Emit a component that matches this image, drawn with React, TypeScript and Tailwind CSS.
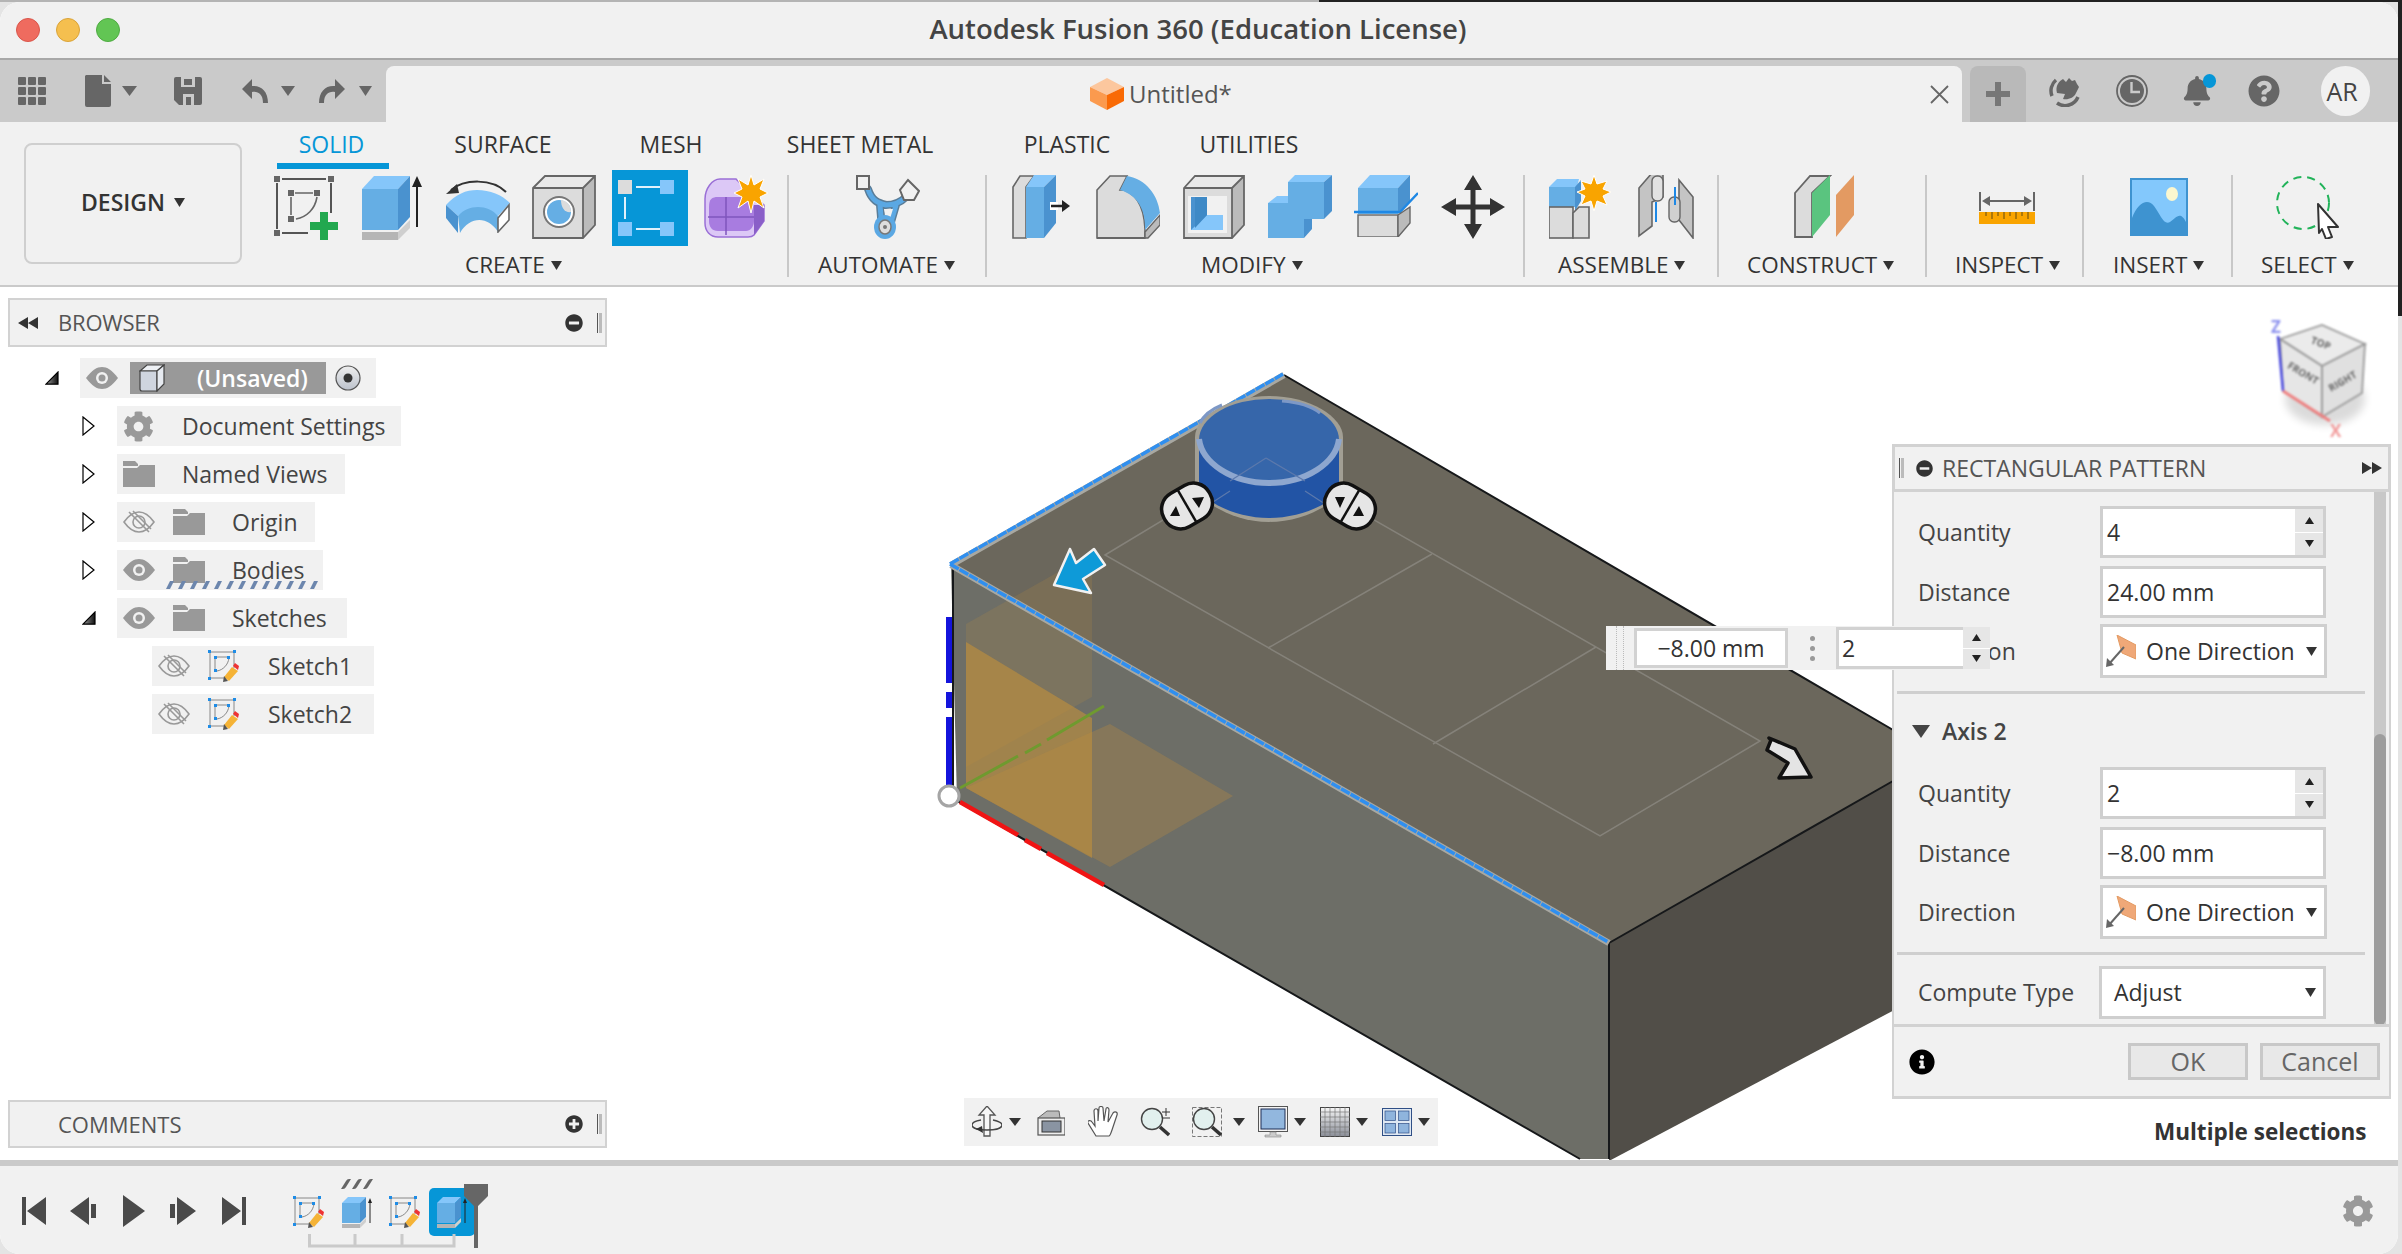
import React from 'react';
import { FaBell, FaCog, FaInfoCircle, FaMinusCircle, FaPlusCircle, FaQuestionCircle } from 'react-icons/fa';

const Caret = ({ className = 'w-[11px] h-[9px]' }: { className?: string }) => (
  <svg viewBox="0 0 10 8" preserveAspectRatio="none" className={className}>
    <path d="M0 0h10L5 8z" fill="currentColor" />
  </svg>
);

/* ---------- ribbon icons ---------- */

const SketchCreate = () => (
  <svg width="64" height="65" viewBox="0 0 64 65">
    <path d="M3 8V54M8 4H52M57 8V38M8 58H34" stroke="#555" strokeWidth="2" fill="none" />
    <g fill="#666">
      <rect x="0" y="1" width="6" height="6" />
      <rect x="54" y="1" width="6" height="6" />
      <rect x="0" y="55" width="6" height="6" />
      <rect x="14" y="15" width="6" height="6" />
      <rect x="40" y="15" width="6" height="6" />
      <rect x="14" y="41" width="6" height="6" />
    </g>
    <path d="M17 22V40M21 18H39M43 22C41 34 33 42 22 44" stroke="#666" strokeWidth="1.6" fill="none" />
    <path d="M46 37h8v10h10v8H54v10h-8V55H36v-8h10z" fill="#22a84f" />
  </svg>
);

const Extrude = () => (
  <svg width="61" height="65" viewBox="0 0 61 65">
    <path d="M0 14 12 1h36L36 14z" fill="#85c6fa" />
    <rect x="0" y="14" width="36" height="41" fill="#65aee4" />
    <path d="M36 14 48 1v41L36 55z" fill="#4a92cf" />
    <rect x="0" y="57" width="36" height="8" fill="#b5b5b5" />
    <path d="M36 57 48 45v8L36 65z" fill="#cfcfcf" />
    <path d="M55 52V8" stroke="#222" strokeWidth="2" />
    <path d="M50 12 55 1l5 11z" fill="#222" />
  </svg>
);

const Revolve = () => (
  <svg width="64" height="53" viewBox="0 0 64 53" className="mt-[5px]">
    <path d="M5 10C18 -1 46 -2 60 12" stroke="#333" strokeWidth="2" fill="none" />
    <path d="M0 14 11 4l2 9z" fill="#333" />
    <path d="M0 25C10 14 20 10 31 10 44 10 56 15 64 23L52 36C44 30 22 28 12 36z" fill="#85c6fa" />
    <path d="M12 36C22 24 42 24 52 36V52C42 36 24 36 14 53z" fill="#65aee4" />
    <path d="M0 25 12 36V53L0 38z" fill="#4a92cf" />
    <path d="M52 38 63 25V40L52 52z" fill="#fff" stroke="#666" strokeWidth="1.6" />
  </svg>
);

const Hole = () => (
  <svg width="64" height="64" viewBox="0 0 64 64">
    <path d="M1 13 13 1h50L51 13z" fill="#e9e9e9" />
    <rect x="1" y="13" width="50" height="50" fill="#dcdcdc" />
    <path d="M51 13 63 1v49L51 63z" fill="#bbb" />
    <path d="M1 13 13 1h50v49L51 63H1zM51 13H1M51 13 63 1M51 13v50" fill="none" stroke="#666" strokeWidth="1.8" />
    <circle cx="27" cy="37" r="15" fill="#fff" stroke="#777" strokeWidth="2" />
    <circle cx="27" cy="37" r="12" fill="#65aee4" />
    <path d="M29 25C29 33 33 38 39 37 39 30 35 26 29 25z" fill="#dcdcdc" />
  </svg>
);

const PatternActive = () => (
  <div className="w-[76px] h-[76px] -mt-[5px] bg-[#0696d7]">
    <svg width="76" height="76" viewBox="0 0 76 76">
      <path d="M24 17H48M13 27V49M24 59H48" stroke="#dff1fb" strokeWidth="2" />
      <rect x="6" y="10" width="14" height="14" fill="#dcdcdc" />
      <rect x="48" y="10" width="14" height="14" fill="#85c6fa" />
      <rect x="6" y="52" width="14" height="14" fill="#85c6fa" />
      <rect x="48" y="52" width="14" height="14" fill="#85c6fa" />
    </svg>
  </div>
);

const PurpleNew = () => (
  <svg width="64" height="63" viewBox="0 0 64 63">
    <path d="M1 24C1 14 8 4 16 4H32L42 14 60 30V46L50 60C48 62 46 62 44 62H14C6 62 1 56 1 48z" fill="#dcc8f6" stroke="#9a6fd6" strokeWidth="1.5" />
    <path d="M5 32C5 24 8 22 14 22H50V46C50 52 46 56 42 56H14C8 56 5 52 5 46z" fill="#a87ce0" />
    <path d="M50 30 60 30V46L50 60z" fill="#8a5fc8" />
    <path d="M4 42H50M22 22V60" stroke="#7f55bd" strokeWidth="1.5" />
    <path d="M47 0 50 10 60 4 56 14 64 18 56 22 60 33 50 26 47 38 44 26 34 33 38 22 30 18 38 14 34 4 44 10z" fill="#f9a400" stroke="#fff" strokeWidth="1" />
  </svg>
);

const Automate = () => (
  <svg width="64" height="64" viewBox="0 0 64 64">
    <g fill="none" strokeLinecap="round">
      <path d="M12 14C16 26 22 28 30 30 38 30 44 28 50 22M24 30 26 54M40 30 33 54" stroke="#5a7d98" strokeWidth="8" />
      <path d="M12 14C16 26 22 28 30 30 38 30 44 28 50 22M24 30 26 54M40 30 33 54" stroke="#5ba8e3" strokeWidth="5" />
    </g>
    <path d="M28 34H37L32 50z" fill="#f1f1f1" />
    <rect x="1" y="1" width="12" height="13" fill="#f1f1f1" stroke="#666" strokeWidth="2" />
    <path d="M52 5 63 16 58 25H48L44 15z" fill="#f1f1f1" stroke="#666" strokeWidth="2" />
    <ellipse cx="29" cy="52" rx="11" ry="12" fill="#5ba8e3" />
    <ellipse cx="29" cy="52" rx="6" ry="7" fill="#ddd" stroke="#777" strokeWidth="1.5" />
    <circle cx="29" cy="52" r="2" fill="#777" />
  </svg>
);

const PressPull = () => (
  <svg width="58" height="64" viewBox="0 0 58 64">
    <path d="M1 63V12L8 1H22L14 12V63z" fill="#dcdcdc" stroke="#666" strokeWidth="1.6" />
    <path d="M14 12 22 0H44L32 12z" fill="#85c6fa" />
    <rect x="14" y="12" width="18" height="51" fill="#65aee4" />
    <path d="M32 12 44 0V48L32 63z" fill="#4a92cf" />
    <rect x="38" y="27" width="8" height="8" fill="#fff" />
    <path d="M39 31H52" stroke="#222" strokeWidth="2.4" />
    <path d="M50 25 58 31 50 37z" fill="#222" />
  </svg>
);

const Fillet = () => (
  <svg width="64" height="64" viewBox="0 0 64 64">
    <path d="M1 63V15L14 1H31L24 15H28C42 20 50 34 49 63z" fill="#dcdcdc" stroke="#666" strokeWidth="1.6" />
    <path d="M24 15 31 1C50 4 62 20 64 38L49 55C50 36 42 20 24 15z" fill="#65aee4" />
    <path d="M49 57 64 40V50L52 63H49z" fill="#bbb" stroke="#666" strokeWidth="1.4" />
    <path d="M1 63H49" stroke="#666" strokeWidth="1.8" />
  </svg>
);

const Shell = () => (
  <svg width="62" height="64" viewBox="0 0 62 64">
    <path d="M1 13 12 1h49L49 13z" fill="#e9e9e9" />
    <rect x="1" y="13" width="48" height="50" fill="#dcdcdc" />
    <path d="M49 13 61 1v49L49 63z" fill="#bbb" />
    <path d="M1 13 12 1h49v49L49 63H1zM49 13H1M49 13 61 1M49 13v50" fill="none" stroke="#666" strokeWidth="1.8" />
    <rect x="5" y="21" width="39" height="37" fill="#f1f1f1" />
    <rect x="8" y="22" width="16" height="33" fill="#4a92cf" />
    <path d="M8 55 24 40H40V55z" fill="#85c6fa" />
    <path d="M12 22H24V40L12 53z" fill="#3e89c6" />
  </svg>
);

const Combine = () => (
  <svg width="64" height="64" viewBox="0 0 64 64">
    <path d="M20 7 27 0H64L56 7zM0 28 9 21H20V28z" fill="#85c6fa" />
    <path d="M0 28H20V7H56V44H36V63H0z" fill="#65aee4" />
    <path d="M56 7 64 0V36L56 44zM36 44H44V54L36 63z" fill="#4a92cf" />
  </svg>
);

const Split = () => (
  <svg width="64" height="62" viewBox="0 0 64 62">
    <path d="M4 13 16 0H56L44 13z" fill="#85c6fa" />
    <rect x="4" y="13" width="40" height="26" fill="#65aee4" />
    <path d="M44 13 56 0V26L44 39z" fill="#4a92cf" />
    <path d="M0 37H46L64 18" stroke="#1e88e5" strokeWidth="2.4" fill="none" />
    <rect x="4" y="40" width="40" height="22" fill="#dcdcdc" stroke="#666" strokeWidth="1.4" />
    <path d="M44 40 56 32V48L44 62z" fill="#bbb" stroke="#666" strokeWidth="1.4" />
  </svg>
);

const Move = () => (
  <svg width="64" height="64" viewBox="0 0 64 64">
    <path d="M32 0 41 15H34.500V29.500H49V23L64 32 49 41V34.500H34.500V49H41L32 64 23 49H29.500V34.500H15V41L0 32 15 23V29.500H29.500V15H23z" fill="#333" />
  </svg>
);

const AssembleNew = () => (
  <svg width="62" height="64" viewBox="0 0 62 64">
    <path d="M0 12 8 4H30L28 12z" fill="#85c6fa" />
    <rect x="0" y="12" width="26" height="20" fill="#65aee4" />
    <path d="M26 12 32 5V26L26 36V32z" fill="#4a92cf" />
    <rect x="0" y="32" width="24" height="31" fill="#dcdcdc" stroke="#666" strokeWidth="1.6" />
    <path d="M24 63V38L30 32H40V63z" fill="#dcdcdc" stroke="#666" strokeWidth="1.6" />
    <path d="M45 0 48 9 58 6 54 14 62 17 54 21 58 30 48 26 45 36 42 26 32 30 36 21 28 17 36 14 32 6 42 9z" fill="#f9a400" stroke="#fff" strokeWidth="1" />
  </svg>
);

const Joint = () => (
  <svg width="56" height="64" viewBox="0 0 56 64">
    <path d="M1 16 14 1H25V25L14 30V54L1 64z" transform="translate(0 -3)" fill="#c4c4c4" stroke="#666" strokeWidth="1.6" />
    <path d="M41 5 55 22V63L41 45z" fill="#c4c4c4" stroke="#666" strokeWidth="1.6" />
    <rect x="14" y="1" width="11" height="25" rx="5" fill="#e2e2e2" stroke="#666" strokeWidth="1.4" />
    <rect x="31" y="22" width="11" height="25" rx="5" fill="#d0d0d0" stroke="#666" strokeWidth="1.4" />
    <path d="M37 12V30M18 27V47" stroke="#1e88e5" strokeWidth="2" />
  </svg>
);

const Construct = () => (
  <svg width="60" height="64" viewBox="0 0 60 64">
    <path d="M1 62V18L16 1H36L18 18V62z" fill="#dcdcdc" stroke="#666" strokeWidth="1.8" />
    <path d="M18 62V18L36 0V40z" fill="#5ac47f" />
    <path d="M42 62V20L60 0V40z" fill="#e39a62" />
  </svg>
);

const Inspect = () => (
  <svg width="56" height="32" viewBox="0 0 56 32" className="mt-[17px]">
    <path d="M1 0V19M55 0V19M6 9H50" stroke="#666" strokeWidth="2" />
    <path d="M3 9 11 4V14zM53 9 45 4V14z" fill="#666" />
    <rect x="0" y="20" width="56" height="12" fill="#f9a400" />
    <path d="M7 20v4M13 20v7M19 20v4M25 20v7M31 20v4M37 20v7M43 20v4M49 20v7" stroke="#7a5a10" strokeWidth="1.2" />
  </svg>
);

const Insert = () => (
  <svg width="58" height="58" viewBox="0 0 58 58" className="mt-[3px]">
    <rect x="1" y="1" width="56" height="56" fill="#83c8fc" stroke="#3e93d0" strokeWidth="2" />
    <ellipse cx="42" cy="16" rx="6" ry="7" fill="#fbf7cf" />
    <path d="M2 40C8 24 18 20 24 28S34 48 40 44 50 32 56 44V56H2z" fill="#3e93d0" />
  </svg>
);

const SelectIcon = () => (
  <svg width="63" height="64" viewBox="0 0 63 64">
    <ellipse cx="27" cy="28" rx="26" ry="26" fill="none" stroke="#22b35a" strokeWidth="2" strokeDasharray="8 6" />
    <path d="M42 29 62 52 52 52 56 62 50 64 46 54 43 58z" fill="#fff" stroke="#333" strokeWidth="2" strokeLinejoin="round" />
  </svg>
);

/* ---------- small icons ---------- */

const Eye = () => (
  <svg width="32" height="22" viewBox="0 0 32 22">
    <path d="M0 11C6 3 11 0 16 0S26 3 32 11C26 19 21 22 16 22S6 19 0 11z" fill="#999" />
    <circle cx="16" cy="11" r="6" fill="#f1f1f1" />
    <circle cx="16" cy="11" r="3.500" fill="#999" />
  </svg>
);

const EyeOff = () => (
  <svg width="32" height="24" viewBox="0 0 32 24">
    <path d="M1 12C6 5 11 2 16 2S26 5 31 12C26 19 21 22 16 22S6 19 1 12z" fill="none" stroke="#999" strokeWidth="1.6" />
    <circle cx="16" cy="12" r="6" fill="none" stroke="#999" strokeWidth="1.6" />
    <path d="M6 2 26 22M10 1 28 19" stroke="#999" strokeWidth="1.6" />
  </svg>
);

const Folder = () => (
  <svg width="32" height="26" viewBox="0 0 32 26">
    <path d="M0 0H12L15 3V5H0zM0 7H14L17 4H32V26H0z" fill="#999" />
  </svg>
);

const SketchSmall = () => (
  <svg width="31" height="32" viewBox="0 0 31 32">
    <path d="M2 2H26V18M2 2V28H16M8 7H20M7 8V20M21 8C20 15 15 20 9 21" stroke="#888" strokeWidth="1" fill="none" />
    <g fill="#1e8ce6">
      <rect x="0" y="0" width="3" height="3" />
      <rect x="25" y="0" width="3" height="3" />
      <rect x="0" y="27" width="3" height="3" />
      <rect x="6" y="6" width="3" height="3" />
      <rect x="19" y="6" width="3" height="3" />
      <rect x="6" y="19" width="3" height="3" />
    </g>
    <path d="M16 27 24 17 30 21 21 31z" fill="#f5b336" />
    <path d="M25 16 27 13 31 16 30 20z" fill="#ee3333" />
    <path d="M16 26 15 32 20 31z" fill="#555" />
  </svg>
);

const ExtrudeSmall = () => (
  <svg width="31" height="31" viewBox="0 0 31 31">
    <path d="M0 6 6 0H24L18 6z" fill="#85c6fa" />
    <rect x="0" y="6" width="18" height="20" fill="#65aee4" />
    <path d="M18 6 24 0V20L18 26z" fill="#4a92cf" />
    <rect x="0" y="27" width="18" height="4" fill="#b5b5b5" />
    <path d="M18 27 24 21V25L18 31z" fill="#cfcfcf" />
    <path d="M28 26V4" stroke="#222" strokeWidth="1" />
    <path d="M26 6 28 1l2 5z" fill="#222" />
  </svg>
);

const Tri = ({ open }: { open: boolean }) =>
  open ? (
    <svg width="14" height="14" viewBox="0 0 14 14">
      <defs>
        <linearGradient id="triopen" x1="0" y1="0" x2="1" y2="0">
          <stop offset="0" stopColor="#999" />
          <stop offset="1" stopColor="#111" />
        </linearGradient>
      </defs>
      <path d="M1 13.200 13 1V13.200z" fill="url(#triopen)" stroke="#000" strokeWidth="1.2" />
    </svg>
  ) : (
    <svg width="14" height="20" viewBox="0 0 14 20">
      <path d="M1 1 12 10 1 19z" fill="#fff" stroke="#000" strokeWidth="1.2" />
    </svg>
  );

const Row = ({
  cls,
  blockCls,
  tri,
  children,
}: {
  cls: string;
  blockCls: string;
  tri?: 'open' | 'closed';
  children: React.ReactNode;
}) => (
  <div className={`flex items-center h-[40px] ${cls}`}>
    {tri && (
      <span className="w-[14px] mr-[21px] flex justify-center">
        <Tri open={tri === 'open'} />
      </span>
    )}
    <div className={`h-[40px] bg-[#f1f1f1] flex items-center text-[23px] text-[#444] leading-none ${blockCls}`}>{children}</div>
  </div>
);

const Grip = () => (
  <span className="flex gap-[1px] h-[20px]">
    <span className="w-[1px] bg-[#555]" />
    <span className="w-[3px] bg-[#bbb]" />
  </span>
);

const Group = ({
  cls,
  label,
  labelCls,
  children,
  last,
}: {
  cls: string;
  label: string;
  labelCls: string;
  children: React.ReactNode;
  last?: boolean;
}) => (
  <div className={`h-[102px] flex flex-col ${last ? '' : 'border-r-2 border-[#c8c8c8]'} ${cls}`}>
    <div className="h-[77px] flex items-start">{children}</div>
    <div className={`h-[25px] flex items-center text-[22.5px] leading-none text-[#333] whitespace-nowrap pt-[2px] ${labelCls}`}>
      {label}
      <Caret className="w-[11px] h-[9px] ml-[6px]" />
    </div>
  </div>
);

const Stepper = () => (
  <span className="ml-auto w-[28px] h-full flex flex-col bg-[#e6e6e6]">
    <span className="flex-1 flex items-center justify-center border-b border-white text-[#222]">
      <Caret className="w-[9px] h-[7px] rotate-180" />
    </span>
    <span className="flex-1 flex items-center justify-center text-[#222]">
      <Caret className="w-[9px] h-[7px]" />
    </span>
  </span>
);

const Direction = ({ className }: { className?: string }) => (
  <svg width="30" height="32" viewBox="0 0 30 32" className={className}>
    <path d="M11 0 30 10V24L16 18z" fill="#efa878" stroke="#e39a62" strokeWidth="1" />
    <path d="M18 12 3 29" stroke="#666" strokeWidth="2" />
    <path d="M0 32 1 23 8 30z" fill="#666" />
  </svg>
);

const Field = ({ label, mt, children, step }: { label: string; mt: string; children: React.ReactNode; step?: boolean }) => (
  <div className={`flex items-center ${mt}`}>
    <span className="w-[182px] ml-[24px] text-[23px] leading-none text-[#444]">{label}</span>
    <div className="relative w-[226px] h-[52px] bg-white border-[3px] border-[#cfcfcf] flex items-center text-[23px] leading-none text-[#333] pl-[4px]">
      {children}
      {step && <Stepper />}
    </div>
  </div>
);

const DirSelect = ({ mt }: { mt: string }) => (
  <div className={`flex items-center ${mt}`}>
    <span className="w-[182px] ml-[24px] text-[23px] leading-none text-[#444]">Direction</span>
    <div className="w-[227px] h-[54px] bg-white border-[3px] border-[#cfcfcf] flex items-center pl-[3px] text-[23px] leading-none text-[#333]">
      <Direction />
      <span className="ml-[10px]">One Direction</span>
      <Caret className="w-[11px] h-[9px] ml-auto mr-[7px]" />
    </div>
  </div>
);

/* ---------- viewport bar ---------- */

const Orbit = () => (
  <svg width="30" height="32" viewBox="0 0 30 32">
    <path d="M15 0 23 9H18V30H12V9H7z" fill="#f7f7f7" stroke="#555" strokeWidth="1.3" />
    <path d="M9 14C3 15 0 17 0 19 0 22 6 24 15 24S30 22 30 19C30 17 26 15 21 14" fill="none" stroke="#444" strokeWidth="1.4" />
    <path d="M10 20 4 23 11 27z" fill="#333" />
  </svg>
);

const Camera = () => (
  <svg width="28" height="28" viewBox="0 0 28 28">
    <path d="M1 10 10 3 22 3 23 10" fill="#bbb" stroke="#666" strokeWidth="1" />
    <rect x="1" y="10" width="27" height="17" fill="#eee" stroke="#555" strokeWidth="1.2" />
    <rect x="5" y="13" width="19" height="11" fill="#8a94a2" stroke="#333" strokeWidth="1" />
  </svg>
);

const Hand = () => (
  <svg width="30" height="32" viewBox="0 0 30 32">
    <path d="M8 30 0 17C-1 14 3 14 4 16L7 20 6 5C6 2 10 2 10 5V15L11 2C11 0 15 0 15 2L16 15 18 3C18 1 21 1 21 4L20 16 25 7C27 5 30 6 29 9L24 24C23 27 22 30 21 30z" fill="#fff" stroke="#555" strokeWidth="1.2" />
  </svg>
);

const ZoomGlass = ({ plus, box }: { plus?: boolean; box?: boolean }) => (
  <svg width="30" height="30" viewBox="0 0 30 30">
    {box && <rect x=".5" y=".5" width="29" height="29" fill="none" stroke="#777" strokeWidth="1" strokeDasharray="4 2" />}
    <circle cx="12" cy="12" r="10.500" fill="#e2f0ee" stroke="#444" strokeWidth="1.4" />
    <path d="M20 20 29 28" stroke="#333" strokeWidth="3.400" />
    {plus && <path d="M22 5h8M26 1v8M22 11h8" stroke="#333" strokeWidth="1" />}
  </svg>
);

const Monitor = () => (
  <svg width="30" height="32" viewBox="0 0 30 32">
    <rect x=".5" y=".5" width="29" height="25" fill="#f4f4f4" stroke="#555" strokeWidth="1" />
    <rect x="3" y="3" width="24" height="20" fill="#92b7de" stroke="#1c2d55" strokeWidth="1" />
    <path d="M12 26V29H7V31H23V29H18V26z" fill="#ccc" stroke="#888" strokeWidth=".6" />
  </svg>
);

const GridDisplay = () => (
  <svg width="30" height="30" viewBox="0 0 30 30">
    <defs>
      <linearGradient id="griddisplay" x1="0" y1="0" x2="0" y2="1">
        <stop offset="0" stopColor="#f5f5f5" />
        <stop offset="1" stopColor="#8b8f99" />
      </linearGradient>
    </defs>
    <rect x=".5" y=".5" width="29" height="29" fill="url(#griddisplay)" stroke="#444" strokeWidth="1" />
    <path d="M5 0V30M10 0V30M15 0V30M20 0V30M25 0V30M0 5H30M0 10H30M0 15H30M0 20H30M0 25H30" stroke="#777" strokeWidth=".7" />
  </svg>
);

const Viewports = () => (
  <svg width="30" height="28" viewBox="0 0 30 28">
    <rect x=".5" y=".5" width="29" height="27" fill="#dfe8f3" stroke="#2f4f86" strokeWidth="1" />
    <g fill="#8fb4dd" stroke="#2f4f86" strokeWidth=".7">
      <rect x="3" y="3" width="10.500" height="9.500" />
      <rect x="16.500" y="3" width="10.500" height="9.500" />
      <rect x="3" y="15.500" width="10.500" height="9.500" />
      <rect x="16.500" y="15.500" width="10.500" height="9.500" />
    </g>
  </svg>
);

const BarCaret = ({ cls }: { cls: string }) => (
  <span className={`text-[#333] ${cls}`}>
    <Caret className="w-[12px] h-[8px]" />
  </span>
);

/* ---------- the model on the canvas, drawn in page coordinates ---------- */

const Handle = ({ x, y, flip }: { x: number; y: number; flip?: boolean }) => (
  <g transform={`translate(${x} ${y})`}>
    <g transform={`rotate(${flip ? 30 : -30})`}>
      <rect x="-26" y="-19" width="52" height="38" rx="18" fill="#e6e6e6" stroke="#111" strokeWidth="3.500" />
      <path d="M0 -19V19" stroke="#111" strokeWidth="2.500" />
    </g>
    {flip ? (
      <path d="M-15 -9H-5L-10 2zM3 10H14L9 0z" fill="#111" />
    ) : (
      <path d="M-17 10H-7L-11 0zM5 -8 17 -9 12 2z" fill="#111" />
    )}
  </g>
);

const Model = () => (
  <svg viewBox="0 287 2398 871" className="absolute inset-0 w-full h-full blur-[0.6px]">
    <path d="M1284 374 951 564 1609 942 1900 776V733z" fill="#6b675c" />
    <path d="M951 564 1609 942V1158H1580L957 800z" fill="#6d6e67" />
    <path d="M1609 942 1900 776V1006L1609 1160z" fill="#514e48" />

    <g stroke="#85827a" strokeWidth="1.500" fill="none">
      <path d="M1105 554 1266 457 1760 740 1600 835z" />
      <path d="M1268 647 1432 553M1433 743 1596 646" />
    </g>

    {/* origin planes */}
    <g>
      <path d="M966 623 1092 552V696L966 766z" fill="#c08f3c" opacity=".18" />
      <path d="M966 641 1092 717V857L966 787z" fill="#c08f3c" opacity=".62" />
      <path d="M966 787 1110 723 1233 795 1110 866z" fill="#c08f3c" opacity=".3" />
    </g>

    <g stroke="#16181a" strokeWidth="2" fill="none">
      <path d="M1284 374 1900 733M1609 942 1900 776M1609 942V1158M953 564V800M957 800 1580 1158" />
    </g>
    <path d="M951 564 1284 374M951 564 1609 942" stroke="#a8a8a2" strokeWidth="6.500" fill="none" />
    <path d="M951 564 1284 374M951 564 1609 942" stroke="#2f8ff0" strokeWidth="3.500" fill="none" strokeDasharray="10 1" transform="translate(-1 -1)" />

    {/* axes */}
    <path d="M949 616V682M949 691V707M949 716V784" stroke="#1414dc" strokeWidth="6" />
    <path d="M960 801 1018 834M1025 839 1041 848M1047 852 1104 884" stroke="#f01414" strokeWidth="4.500" />
    <path d="M960 787 1018 755M1025 752 1041 743M1047 739 1104 705" stroke="#6f9a2f" strokeWidth="3" />
    <circle cx="949" cy="795" r="10" fill="#fff" stroke="#a5a5a5" strokeWidth="3" />

    {/* selected cylinder */}
    <path d="M1195 436V490C1210 506 1238 521 1269 521 1300 521 1330 506 1343 490V436C1343 416 1310 395 1269 395 1228 395 1195 416 1195 436z" fill="#a29f94" />
    <path d="M1199 438V490C1212 505 1240 517 1269 517 1298 517 1328 505 1339 490V438z" fill="#2254a5" />
    <ellipse cx="1269" cy="439" rx="70" ry="41" fill="#3666aa" />
    <path d="M1199 438C1202 462 1232 482 1269 482 1306 482 1336 462 1339 438" stroke="#8ea7cf" strokeWidth="6" fill="none" />
    <path d="M1266 457 1230 480M1266 457 1305 480M1230 490 1210 503M1305 490 1325 503" stroke="#5c79ac" strokeWidth="1.200" fill="none" />
    <path d="M1222 404C1212 408 1204 414 1200 422M1282 400C1296 401 1310 404 1320 412" stroke="#7d98c6" strokeWidth="3" fill="none" />
    <Handle x={1187} y={505} />
    <Handle x={1350} y={505} flip />

    {/* distance arrows */}
    <path d="M1070 548 1054 584 1091 592 1083 578 1105 564 1094 548 1076 562z" fill="#0e9ad8" stroke="#f1f1f1" strokeWidth="2.500" strokeLinejoin="round" />
    <path d="M1769 737 1795 748 1811 776 1779 777 1788 762 1767 749 1771 739z" fill="#e4e4e4" stroke="#111" strokeWidth="3.500" strokeLinejoin="round" />

    {/* view cube */}
    <g className="blur-[1px]">
      <ellipse cx="2325" cy="398" rx="40" ry="26" fill="#000" opacity=".14" className="blur-[4px]" />
      <path d="M2280 338 2322 324 2365 343 2322 365z" fill="#ebebeb" stroke="#999" strokeWidth="1.800" />
      <path d="M2280 338 2322 365V416L2283 390z" fill="#e6e6e6" stroke="#999" strokeWidth="1.800" />
      <path d="M2322 365 2365 343 2362 392 2322 416z" fill="#e0e0e0" stroke="#999" strokeWidth="1.800" />
      <path d="M2278 335 2283 390" stroke="#4646e0" strokeWidth="2.500" />
      <path d="M2283 390 2330 420" stroke="#ef8181" strokeWidth="3" />
      <text x="2271" y="332" fontFamily="'Open Sans', sans-serif" fontSize="17" fontWeight="700" fill="#8d92ee">Z</text>
      <text x="2330" y="436" fontFamily="'Open Sans', sans-serif" fontSize="17" fontWeight="700" fill="#f29a9a">X</text>
      <text x="2311" y="346" fontFamily="'Open Sans', sans-serif" fontSize="10" fontWeight="700" fill="#666" transform="rotate(20 2322 342)">TOP</text>
      <text x="2286" y="375" fontFamily="'Open Sans', sans-serif" fontSize="10" fontWeight="700" fill="#666" transform="rotate(30 2302 372)">FRONT</text>
      <text x="2327" y="384" fontFamily="'Open Sans', sans-serif" fontSize="10" fontWeight="700" fill="#666" transform="rotate(-30 2342 380)">RIGHT</text>
    </g>
  </svg>
);

export default function App() {
  return (
    <div className="w-[2402px] h-[1254px] flex flex-col bg-[#e4e4e4] overflow-hidden font-['Open_Sans',sans-serif]">
      <div className="h-[2px] shrink-0 flex">
        <div className="w-[1319px] bg-[#b4b4b4]" />
        <div className="flex-1 bg-[#222]" />
      </div>
      <div className="h-[1252px] flex">
        <div className="w-[2398px] h-[1252px] rounded-[20px] overflow-hidden bg-white flex flex-col">
          {/* title bar */}
          <div className="relative h-[58px] shrink-0 bg-[#f1f1f1] border-b-2 border-[#a8a8a8] flex items-center justify-center pb-[2px]">
            <div className="absolute left-[16px] top-[16px] flex gap-[16px]">
              <span className="w-[24px] h-[24px] rounded-full bg-[#ef6b5f] border border-[#d9564b]" />
              <span className="w-[24px] h-[24px] rounded-full bg-[#f5bf4f] border border-[#d9a339]" />
              <span className="w-[24px] h-[24px] rounded-full bg-[#62c554] border border-[#4fab42]" />
            </div>
            <span className="text-[27.5px] font-semibold text-[#444] leading-none pr-[2px]">Autodesk Fusion 360 (Education License)</span>
          </div>

          {/* tab strip */}
          <div className="h-[62px] shrink-0 bg-[#cacaca] flex items-end text-[#666]">
            <div className="w-[386px] h-full flex items-center">
              <svg width="28" height="28" viewBox="0 0 28 28" className="ml-[18px]">
                <g fill="#666">
                  <rect width="8" height="8" rx="1" /><rect x="10" width="8" height="8" rx="1" /><rect x="20" width="8" height="8" rx="1" />
                  <rect y="10" width="8" height="8" rx="1" /><rect x="10" y="10" width="8" height="8" rx="1" /><rect x="20" y="10" width="8" height="8" rx="1" />
                  <rect y="20" width="8" height="8" rx="1" /><rect x="10" y="20" width="8" height="8" rx="1" /><rect x="20" y="20" width="8" height="8" rx="1" />
                </g>
              </svg>
              <svg width="26" height="32" viewBox="0 0 26 32" className="ml-[39px]">
                <path d="M1 0H17V9H26V30Q26 32 24 32H2Q0 32 0 30V1zM19 0 26 7H19z" fill="#666" />
              </svg>
              <Caret className="w-[15px] h-[10px] ml-[11px]" />
              <svg width="28" height="28" viewBox="0 0 28 28" className="ml-[37px]">
                <path d="M2 0H26Q28 0 28 2V26Q28 28 26 28H5L0 23V2Q0 0 2 0z" fill="#666" />
                <rect x="7" y="0" width="14" height="10" fill="#cacaca" />
                <rect x="10" y="2" width="8" height="6" fill="#666" />
                <path d="M9 28V17H20V28H17V20H12V28z" fill="#cacaca" />
              </svg>
              <svg width="27" height="24" viewBox="0 0 27 24" className="ml-[39px]">
                <path d="M11 0 1 10 11 20 11 13C17 12 22 15 22 24H27C27 12 20 6 11 7z" fill="#666" />
              </svg>
              <Caret className="w-[14px] h-[10px] ml-[13px]" />
              <svg width="26" height="24" viewBox="0 0 26 24" className="ml-[24px]">
                <path d="M16 0 26 10 16 20 16 13C10 12 5 15 5 24H0C0 12 7 6 16 7z" fill="#666" />
              </svg>
              <Caret className="w-[13px] h-[10px] ml-[14px]" />
            </div>
            <div className="w-[1576px] h-[56px] bg-[#f1f1f1] rounded-t-lg flex items-center pl-[704px]">
              <svg width="34" height="32" viewBox="0 0 34 32">
                <path d="M17 0 34 9 17 17 0 9z" fill="#fcc79e" />
                <path d="M0 9 17 17V32L0 23z" fill="#fb9a4e" />
                <path d="M34 9 17 17V32L34 23z" fill="#f96a05" />
              </svg>
              <span className="ml-[5px] text-[24px] leading-none text-[#555]">Untitled*</span>
              <svg width="19" height="19" viewBox="0 0 19 19" className="ml-auto mr-[13px]">
                <path d="M1 1 18 18M18 1 1 18" stroke="#666" strokeWidth="1.800" />
              </svg>
            </div>
            <div className="ml-[8px] w-[56px] h-[56px] bg-[#b9b9b9] rounded-t-lg flex items-center justify-center">
              <svg width="24" height="24" viewBox="0 0 24 24">
                <path d="M9 0h6v9h9v6h-9v9H9v-9H0V9h9z" fill="#777" />
              </svg>
            </div>
            <div className="h-full flex items-center">
              <svg width="32" height="32" viewBox="0 0 32 32" className="ml-[23px]">
                <path d="M8 28A14 14 0 0 0 29 22M7 5A14 14 0 0 0 3 21" fill="none" stroke="#666" strokeWidth="3.500" />
                <path d="M8 18C6 11 10 6 14 4L17 7 20 3 23 6 26 5 28 9 30 12 27 18C25 23 19 25 14 24L16 19z" fill="#666" />
              </svg>
              <svg width="32" height="32" viewBox="0 0 32 32" className="ml-[35px]">
                <circle cx="16" cy="16" r="15" fill="none" stroke="#666" strokeWidth="1.800" />
                <circle cx="16" cy="16" r="12" fill="#666" />
                <path d="M15.500 7V17H24" stroke="#cacaca" strokeWidth="2.400" fill="none" />
              </svg>
              <span className="relative ml-[33px] w-[32px] h-[32px] flex items-center justify-center">
                <FaBell size={30} color="#666" />
                <span className="absolute right-[-3px] top-[-1px] w-[13px] h-[14px] rounded-full bg-[#0696d7]" />
              </span>
              <span className="ml-[35px]">
                <FaQuestionCircle size={32} color="#666" />
              </span>
              <span className="ml-[41px] w-[49px] h-[50px] rounded-full bg-[#f1f1f1] flex items-center justify-center text-[25px] text-[#444] leading-none pr-[7px]">AR</span>
            </div>
          </div>

          {/* ribbon */}
          <div className="h-[165px] shrink-0 bg-[#f1f1f1] border-b-2 border-[#cacaca] flex items-start">
            <div className="ml-[24px] mt-[21px] w-[218px] h-[121px] rounded-lg border-2 border-[#cfcfcf] flex items-center justify-center text-[23px] font-semibold text-[#333] leading-none pb-[2px]">
              DESIGN
              <Caret className="w-[11px] h-[9px] ml-[9px]" />
            </div>
            <div className="ml-[26px] flex flex-col">
              <div className="h-[39px] mt-[8px] flex items-start text-[23px] leading-none text-[#333]">
                <div className="ml-[9px] w-[112px] h-[39px] text-center text-[#0696d7] border-b-[6px] border-[#0696d7] pt-[3px] pr-[3px]">SOLID</div>
                <div className="ml-[34px] w-[160px] text-center pt-[3px]">SURFACE</div>
                <div className="ml-[48px] w-[80px] text-center pt-[3px]">MESH</div>
                <div className="ml-[59px] w-[180px] text-center pt-[3px]">SHEET METAL</div>
                <div className="ml-[57px] w-[120px] text-center pt-[3px]">PLASTIC</div>
                <div className="ml-[52px] w-[140px] text-center pt-[3px]">UTILITIES</div>
              </div>
              <div className="mt-[6px] flex">
                <Group cls="w-[521px] pl-[6px]" label="CREATE" labelCls="ml-[191px]">
                  <SketchCreate />
                  <span className="ml-[24px]"><Extrude /></span>
                  <span className="ml-[23px]"><Revolve /></span>
                  <span className="ml-[22px]"><Hole /></span>
                  <span className="ml-[16px]"><PatternActive /></span>
                  <span className="ml-[16px]"><PurpleNew /></span>
                </Group>
                <Group cls="w-[198px]" label="AUTOMATE" labelCls="ml-[29px]">
                  <span className="ml-[67px]"><Automate /></span>
                </Group>
                <Group cls="w-[538px]" label="MODIFY" labelCls="ml-[214px]">
                  <span className="ml-[25px]"><PressPull /></span>
                  <span className="ml-[26px]"><Fillet /></span>
                  <span className="ml-[23px]"><Shell /></span>
                  <span className="ml-[23px]"><Combine /></span>
                  <span className="ml-[22px]"><Split /></span>
                  <span className="ml-[23px]"><Move /></span>
                </Group>
                <Group cls="w-[194px]" label="ASSEMBLE" labelCls="ml-[33px]">
                  <span className="ml-[24px]"><AssembleNew /></span>
                  <span className="ml-[27px]"><Joint /></span>
                </Group>
                <Group cls="w-[208px]" label="CONSTRUCT" labelCls="ml-[28px]">
                  <span className="ml-[75px]"><Construct /></span>
                </Group>
                <Group cls="w-[157px]" label="INSPECT" labelCls="ml-[28px]">
                  <span className="ml-[52px]"><Inspect /></span>
                </Group>
                <Group cls="w-[149px]" label="INSERT" labelCls="ml-[29px]">
                  <span className="ml-[46px]"><Insert /></span>
                </Group>
                <Group cls="w-[150px]" label="SELECT" labelCls="ml-[28px]" last>
                  <span className="ml-[43px]"><SelectIcon /></span>
                </Group>
              </div>
            </div>
          </div>

          {/* canvas */}
          <div className="relative flex-1 bg-white overflow-hidden">
            <Model />

            {/* browser */}
            <div className="absolute left-[8px] top-[11px] w-[599px] flex flex-col">
              <div className="h-[49px] bg-[#f1f1f1] border-2 border-[#d2d2d2] flex items-center text-[22px] text-[#555] leading-none">
                <svg width="20" height="12" viewBox="0 0 20 12" className="ml-[8px]">
                  <path d="M10 0V12L0 6zM20 0V12L10 6z" fill="#333" />
                </svg>
                <span className="ml-[20px] pb-[2px] tracking-[-0.2px]">BROWSER</span>
                <span className="ml-auto"><FaMinusCircle size={18} color="#333" /></span>
                <span className="ml-[14px] mr-[3px]"><Grip /></span>
              </div>
              <div className="mt-[11px] flex flex-col gap-[8px]">
                <Row cls="ml-[37px]" tri="open" blockCls="w-[296px] pl-[6px]">
                  <Eye />
                  <div className="ml-[12px] w-[196px] h-[32px] bg-[#999] flex items-center pl-[9px] font-semibold text-white">
                    <svg width="26" height="28" viewBox="0 0 26 28">
                      <path d="M1 7 8 1H25L18 7z" fill="#eef1f5" stroke="#444" strokeWidth="1.200" />
                      <path d="M1 7H18V27H3Q1 27 1 25z" fill="#cfd5df" stroke="#444" strokeWidth="1.200" />
                      <path d="M18 7 25 1V20L18 27z" fill="#e6eaf0" stroke="#444" strokeWidth="1.200" />
                    </svg>
                    <span className="ml-[32px]">(Unsaved)</span>
                  </div>
                  <svg width="26" height="26" viewBox="0 0 26 26" className="ml-[9px]">
                    <defs>
                      <linearGradient id="radiofill" x1="0" y1="0" x2="0" y2="1">
                        <stop offset="0" stopColor="#eee" />
                        <stop offset="1" stopColor="#bcc2cc" />
                      </linearGradient>
                    </defs>
                    <circle cx="13" cy="13" r="12" fill="url(#radiofill)" stroke="#555" strokeWidth="1.200" />
                    <circle cx="13" cy="13" r="4.500" fill="#333" />
                  </svg>
                </Row>
                <Row cls="ml-[74px]" tri="closed" blockCls="w-[284px] pl-[6px]">
                  <FaCog size={31} color="#999" />
                  <span className="ml-[28px]">Document Settings</span>
                </Row>
                <Row cls="ml-[74px]" tri="closed" blockCls="w-[228px] pl-[6px]">
                  <Folder />
                  <span className="ml-[27px]">Named Views</span>
                </Row>
                <Row cls="ml-[74px]" tri="closed" blockCls="w-[198px] pl-[6px]">
                  <EyeOff />
                  <span className="ml-[18px]"><Folder /></span>
                  <span className="ml-[27px]">Origin</span>
                </Row>
                <Row cls="ml-[74px]" tri="closed" blockCls="relative w-[206px] pl-[6px]">
                  <Eye />
                  <span className="ml-[18px]"><Folder /></span>
                  <span className="ml-[27px]">Bodies</span>
                  <svg width="154" height="8" viewBox="0 0 154 8" className="absolute left-[49px] bottom-[1px]">
                    <path d="M0 8 4 0H8L4 8zM12 8 16 0H20L16 8zM24 8 28 0H32L28 8zM36 8 40 0H44L40 8zM48 8 52 0H56L52 8zM60 8 64 0H68L64 8zM72 8 76 0H80L76 8zM84 8 88 0H92L88 8zM96 8 100 0H104L100 8zM108 8 112 0H116L112 8zM120 8 124 0H128L124 8zM132 8 136 0H140L136 8zM144 8 148 0H152L148 8z" fill="#6c86ad" />
                  </svg>
                </Row>
                <Row cls="ml-[74px]" tri="open" blockCls="w-[230px] pl-[6px]">
                  <Eye />
                  <span className="ml-[18px]"><Folder /></span>
                  <span className="ml-[27px]">Sketches</span>
                </Row>
                <Row cls="ml-[144px]" blockCls="w-[222px] pl-[6px]">
                  <EyeOff />
                  <span className="ml-[18px]"><SketchSmall /></span>
                  <span className="ml-[29px]">Sketch1</span>
                </Row>
                <Row cls="ml-[144px]" blockCls="w-[222px] pl-[6px]">
                  <EyeOff />
                  <span className="ml-[18px]"><SketchSmall /></span>
                  <span className="ml-[29px]">Sketch2</span>
                </Row>
              </div>
            </div>

            {/* comments */}
            <div className="absolute left-[8px] top-[813px] w-[599px] h-[48px] bg-[#f1f1f1] border-2 border-[#d2d2d2] flex items-center text-[22px] text-[#555] leading-none">
              <span className="ml-[48px]">COMMENTS</span>
              <span className="ml-auto"><FaPlusCircle size={18} color="#333" /></span>
              <span className="ml-[14px] mr-[3px]"><Grip /></span>
            </div>

            {/* viewport bar */}
            <div className="absolute left-[964px] top-[811px] w-[474px] h-[48px] bg-[#f1f1f1] flex items-center">
              <span className="ml-[8px]"><Orbit /></span>
              <BarCaret cls="ml-[7px]" />
              <span className="ml-[16px]"><Camera /></span>
              <span className="ml-[23px]"><Hand /></span>
              <span className="ml-[22px]"><ZoomGlass plus /></span>
              <span className="ml-[22px]"><ZoomGlass box /></span>
              <BarCaret cls="ml-[11px]" />
              <span className="ml-[13px]"><Monitor /></span>
              <BarCaret cls="ml-[6px]" />
              <span className="ml-[14px]"><GridDisplay /></span>
              <BarCaret cls="ml-[6px]" />
              <span className="ml-[14px]"><Viewports /></span>
              <BarCaret cls="ml-[6px]" />
            </div>

            {/* rectangular pattern dialog */}
            <div className="absolute left-[1892px] top-[157px] w-[499px] flex flex-col border-x-2 border-b-[3px] border-[#d2d2d2] bg-[#f1f1f1]">
              <div className="h-[48px] -mx-[2px] border-[3px] border-[#d2d2d2] flex items-center text-[23px] leading-none text-[#555]">
                <span className="ml-[4px]"><Grip /></span>
                <span className="ml-[12px]"><FaMinusCircle size={17} color="#333" /></span>
                <span className="ml-[9px]">RECTANGULAR PATTERN</span>
                <svg width="20" height="12" viewBox="0 0 20 12" className="ml-auto mr-[6px]">
                  <path d="M0 0V12L10 6zM10 0V12L20 6z" fill="#333" />
                </svg>
              </div>
              <div className="h-[533px] flex">
                <div className="flex-1 min-w-0 flex flex-col pt-[14px] overflow-hidden">
                  <Field label="Quantity" mt="" step>4</Field>
                  <Field label="Distance" mt="mt-[8px]">24.00 mm</Field>
                  <DirSelect mt="mt-[6px]" />
                  <div className="mt-[13px] ml-[3px] mr-[9px] h-[3px] bg-[#cfcfcf] shrink-0" />
                  <div className="mt-[26px] ml-[18px] flex items-center text-[23px] font-semibold leading-none text-[#444]">
                    <Caret className="w-[18px] h-[13px]" />
                    <span className="ml-[12px]">Axis 2</span>
                  </div>
                  <div className="mt-[24px]">
                    <Field label="Quantity" mt="" step>2</Field>
                  </div>
                  <Field label="Distance" mt="mt-[8px]">−8.00 mm</Field>
                  <DirSelect mt="mt-[6px]" />
                  <div className="mt-[13px] ml-[3px] mr-[9px] h-[3px] bg-[#cfcfcf] shrink-0" />
                  <div className="mt-[11px] flex items-center">
                    <span className="w-[181px] ml-[24px] text-[23px] leading-none text-[#444]">Compute Type</span>
                    <div className="w-[227px] h-[53px] bg-white border-[3px] border-[#cfcfcf] flex items-center pl-[12px] text-[23px] leading-none text-[#333]">
                      Adjust
                      <Caret className="w-[11px] h-[9px] ml-auto mr-[7px]" />
                    </div>
                  </div>
                </div>
                <div className="w-[12px] mr-[3px] bg-[#c8c8c8] flex flex-col justify-end">
                  <div className="h-[291px] bg-[#9d9d9d] rounded-full" />
                </div>
              </div>
              <div className="h-[72px] border-t-[3px] border-[#d2d2d2] flex items-center -mt-[1px]">
                <span className="ml-[15px]"><FaInfoCircle size={26} color="#000" /></span>
                <div className="ml-[193px] w-[120px] h-[37px] bg-[#e8e8e8] border-[3px] border-[#c8c8c8] flex items-center justify-center text-[25px] text-[#666] leading-none">OK</div>
                <div className="ml-[12px] w-[120px] h-[37px] bg-[#e8e8e8] border-[3px] border-[#c8c8c8] flex items-center justify-center text-[25px] text-[#666] leading-none">Cancel</div>
              </div>
            </div>

            {/* floating manipulator inputs */}
            <div className="absolute left-[1606px] top-[339px] w-[384px] h-[44px] bg-[#f1f1f1] flex items-center text-[23px] leading-none text-[#333]">
              <span className="ml-[10px] w-[8px] h-full border-x border-dotted border-[#bbb]" />
              <span className="ml-[10px] w-[154px] h-[40px] bg-white border-[3px] border-[#d2d2d2] flex items-center justify-center">−8.00 mm</span>
              <span className="w-[48px] flex flex-col items-center gap-[5px]">
                <span className="w-[5px] h-[5px] bg-[#999] rounded-full" />
                <span className="w-[5px] h-[5px] bg-[#999] rounded-full" />
                <span className="w-[5px] h-[5px] bg-[#999] rounded-full" />
              </span>
              <span className="w-[127px] h-[42px] bg-white border-[3px] border-r-0 border-[#d2d2d2] flex items-center pl-[3px]">2</span>
              <span className="w-[27px] h-[42px] flex flex-col bg-[#e6e6e6] text-[#222]">
                <span className="flex-1 flex items-center justify-center border-b border-white"><Caret className="w-[9px] h-[7px] rotate-180" /></span>
                <span className="flex-1 flex items-center justify-center"><Caret className="w-[9px] h-[7px]" /></span>
              </span>
            </div>

            <span className="absolute left-[2154px] top-[831px] text-[22.5px] font-bold leading-[28px] text-[#333] whitespace-nowrap">Multiple selections</span>
          </div>

          {/* timeline */}
          <div className="relative h-[94px] shrink-0 bg-[#f1f1f1] border-t-[6px] border-[#cacaca] flex items-center pt-[2px] text-[#4a4a4a]">
            <svg width="24" height="28" viewBox="0 0 24 28" className="ml-[22px]">
              <path d="M0 0H4V28H0zM24 0V28L5 14z" fill="currentColor" />
            </svg>
            <svg width="26" height="28" viewBox="0 0 26 28" className="ml-[24px]">
              <path d="M19 0V28L0 14zM21 7H26V21H21z" fill="currentColor" />
            </svg>
            <svg width="22" height="32" viewBox="0 0 22 32" className="ml-[27px]">
              <path d="M0 0 22 16 0 32z" fill="currentColor" />
            </svg>
            <svg width="26" height="28" viewBox="0 0 26 28" className="ml-[25px]">
              <path d="M7 0V28L26 14zM0 7H5V21H0z" fill="currentColor" />
            </svg>
            <svg width="24" height="28" viewBox="0 0 24 28" className="ml-[26px]">
              <path d="M0 0V28L19 14zM20 0H24V28H20z" fill="currentColor" />
            </svg>
            <span className="ml-[47px] mt-[2px]"><SketchSmall /></span>
            <span className="relative ml-[18px] mt-[2px]">
              <ExtrudeSmall />
              <svg width="32" height="11" viewBox="0 0 32 11" className="absolute left-[-1px] top-[-19px]">
                <path d="M0 11 5 3Q6 1 8 1H10L5 9Q4 11 2 11zM11 11 16 3Q17 1 19 1H21L16 9Q15 11 13 11zM22 11 27 3Q28 1 30 1H32L27 9Q26 11 24 11z" fill="#666" />
              </svg>
            </span>
            <span className="ml-[16px] mt-[2px]"><SketchSmall /></span>
            <div className="ml-[9px] w-[46px] h-[48px] bg-[#0696d7] rounded-[5px] flex items-center justify-center mt-[2px]">
              <ExtrudeSmall />
            </div>
            <svg width="180" height="64" viewBox="0 0 180 64" className="absolute left-[308px] top-[18px]">
              <path d="M1.500 50V62H146V50M47 50V62M94 50V62" stroke="#cacaca" strokeWidth="3" fill="none" />
              <path d="M156 0H180V12L170 22V64H166V22L156 12z" fill="#666" />
            </svg>
            <span className="ml-auto mr-[24px]"><FaCog size={32} color="#999" /></span>
          </div>
        </div>
        <div className="w-[4px] flex flex-col">
          <div className="h-[314px] bg-[#222]" />
        </div>
      </div>
    </div>
  );
}
